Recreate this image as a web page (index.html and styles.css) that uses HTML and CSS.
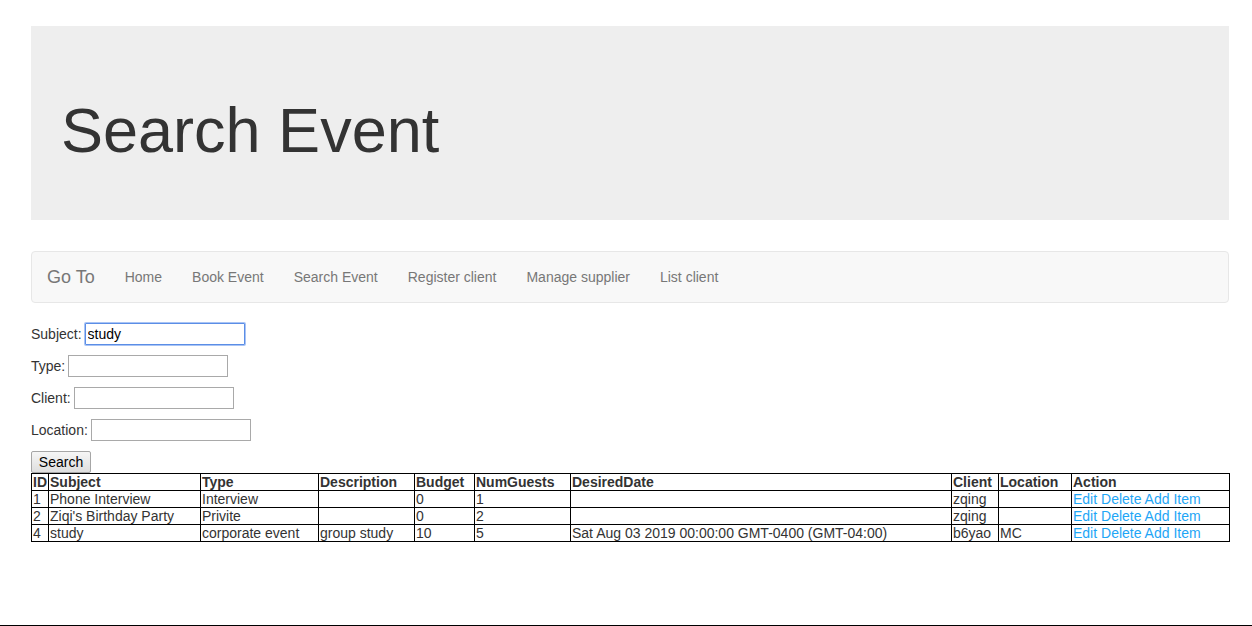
FILE: index.html
```html
<!DOCTYPE html>
<html>
<head>
<meta charset="utf-8">
<title>Search Event</title>
<link rel="stylesheet" href="styles.css">
</head>
<body>
<div class="page">
  <div class="container">
    <div class="jumbotron">
      <h1>Search Event</h1>
    </div>
    <nav class="navbar">
      <span class="brand">Go To</span>
      <ul class="nav">
        <li><a href="#">Home</a></li>
        <li><a href="#">Book Event</a></li>
        <li><a href="#">Search Event</a></li>
        <li><a href="#">Register client</a></li>
        <li><a href="#">Manage supplier</a></li>
        <li><a href="#">List client</a></li>
      </ul>
    </nav>
    <form class="search-form">
      <div class="row"><span class="label">Subject:</span> <input type="text" class="field focused" value="study"></div>
      <div class="row"><span class="label">Type:</span> <input type="text" class="field"></div>
      <div class="row"><span class="label">Client:</span> <input type="text" class="field"></div>
      <div class="row"><span class="label">Location:</span> <input type="text" class="field"></div>
      <button type="button" class="btn">Search</button>
    </form>
    <table class="events">
      <colgroup>
        <col class="c-id"><col class="c-subject"><col class="c-type"><col class="c-desc"><col class="c-budget"><col class="c-guests"><col class="c-date"><col class="c-client"><col class="c-loc"><col class="c-action">
      </colgroup>
      <thead>
        <tr><th>ID</th><th>Subject</th><th>Type</th><th>Description</th><th>Budget</th><th>NumGuests</th><th>DesiredDate</th><th>Client</th><th>Location</th><th>Action</th></tr>
      </thead>
      <tbody>
        <tr><td>1</td><td>Phone Interview</td><td>Interview</td><td></td><td>0</td><td>1</td><td></td><td>zqing</td><td></td><td><a href="#">Edit</a> <a href="#">Delete</a> <a href="#">Add Item</a></td></tr>
        <tr><td>2</td><td>Ziqi's Birthday Party</td><td>Privite</td><td></td><td>0</td><td>2</td><td></td><td>zqing</td><td></td><td><a href="#">Edit</a> <a href="#">Delete</a> <a href="#">Add Item</a></td></tr>
        <tr><td>4</td><td>study</td><td>corporate event</td><td>group study</td><td>10</td><td>5</td><td>Sat Aug 03 2019 00:00:00 GMT-0400 (GMT-04:00)</td><td>b6yao</td><td>MC</td><td><a href="#">Edit</a> <a href="#">Delete</a> <a href="#">Add Item</a></td></tr>
      </tbody>
    </table>
  </div>
</div>
</body>
</html>
```
FILE: styles.css
```css
* { box-sizing: border-box; }
html, body { margin: 0; padding: 0; }
body {
  font-family: "Liberation Sans", Arial, sans-serif;
  font-size: 14px;
  line-height: 1.42857;
  color: #333;
  background: #fff;
}
.page {
  min-height: 626px;
  border-bottom: 1px solid #000;
}
.container {
  padding: 26px 23px 0 31px;
}
.jumbotron {
  background: #eee;
  padding: 48px 30px;
  margin-bottom: 31px;
  height: 194px;
}
.jumbotron h1 {
  margin: 20px 0 10px;
  font-size: 63px;
  font-weight: 400;
  line-height: 1.1;
  color: #333;
  position: relative;
  top: 2px;
}
.navbar {
  display: flex;
  align-items: center;
  height: 52px;
  background: #f8f8f8;
  border: 1px solid #e7e7e7;
  border-radius: 4px;
  margin-bottom: 20px;
}
.brand {
  font-size: 18px;
  color: #777;
  padding: 0 15px;
  line-height: 20px;
}
.nav {
  display: flex;
  list-style: none;
  margin: 0;
  padding: 0;
}
.nav a {
  display: block;
  padding: 15px;
  line-height: 20px;
  color: #777;
  text-decoration: none;
}
.search-form .row {
  height: 22px;
  margin-bottom: 10px;
  display: flex;
  align-items: center;
  gap: 3px;
}
.search-form .label {
  padding-top: 2px;
}
.field {
  width: 160px;
  height: 22px;
  border: 1px solid #a9a9a9;
  font-family: "Liberation Sans", Arial, sans-serif;
  font-size: 14px;
  padding: 1px 2px;
  color: #000;
  margin: 0;
}
.field.focused {
  border: 1px solid #5b8ee6;
  box-shadow: 0 0 0 1px #a9c4f5;
  border-radius: 1px;
}
.btn {
  display: block;
  height: 22px;
  width: 60px;
  margin: 0;
  padding: 0;
  font-family: "Liberation Sans", Arial, sans-serif;
  font-size: 14px;
  color: #000;
  background: linear-gradient(#f6f6f6, #dedede);
  border: 1px solid #a6a6a6;
  border-radius: 2px;
}
.events {
  width: 1198px;
  border-collapse: collapse;
  table-layout: fixed;
  border: 1px solid #000;
  line-height: 16px;
}
.events th, .events td {
  border: 1px solid #000;
  padding: 0 0 0 1px;
  text-align: left;
  white-space: nowrap;
  overflow: hidden;
  height: 17px;
}
.events th { font-weight: bold; }
.events a { color: #1ea6f6; text-decoration: none; }
.c-id { width: 17px; }
.c-subject { width: 152px; }
.c-type { width: 118px; }
.c-desc { width: 96px; }
.c-budget { width: 60px; }
.c-guests { width: 96px; }
.c-date { width: 381px; }
.c-client { width: 47px; }
.c-loc { width: 73px; }
.c-action { width: 158px; }
```
